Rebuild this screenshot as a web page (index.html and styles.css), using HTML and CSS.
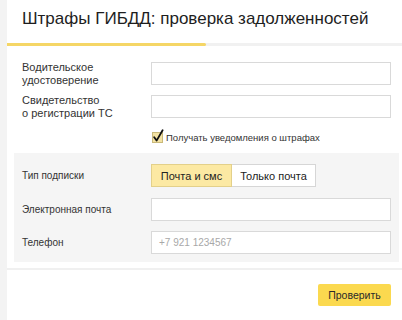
FILE: index.html
```html
<!DOCTYPE html>
<html lang="ru">
<head>
<meta charset="utf-8">
<link rel="stylesheet" href="styles.css">
</head>
<body>
<div class="card">
  <h1 class="title">Штрафы ГИБДД: проверка задолженностей</h1>
  <div class="progress"><div class="progress-fill"></div></div>

  <div class="form-top">
    <div class="row">
      <label class="label">Водительское<br>удостоверение</label>
      <div class="input"></div>
    </div>
    <div class="row">
      <label class="label">Свидетельство<br>о регистрации ТС</label>
      <div class="input"></div>
    </div>
    <div class="row check-row">
      <span></span>
      <div class="check">
        <svg class="check-box" width="14" height="14" viewBox="0 0 14 14">
          <rect x="0.5" y="3.5" width="10" height="10" fill="#f3e2a2" stroke="#c9b97a"/>
          <path d="M2.2 8.2 L4.6 11.6 L10.6 1.2" fill="none" stroke="#111" stroke-width="1.8" stroke-linejoin="round" stroke-linecap="round"/>
        </svg>
        <span class="check-text">Получать уведомления о штрафах</span>
      </div>
    </div>
  </div>

  <div class="form-grey">
    <div class="row">
      <span class="label label-sm">Тип подписки</span>
      <div class="seg">
        <span class="seg-btn seg-active">Почта и смс</span>
        <span class="seg-btn">Только почта</span>
      </div>
    </div>
    <div class="row">
      <span class="label label-sm">Электронная почта</span>
      <div class="input"></div>
    </div>
    <div class="row">
      <span class="label label-sm">Телефон</span>
      <div class="input"><span class="placeholder">+7 921 1234567</span></div>
    </div>
  </div>

  <div class="footer">
    <span class="submit">Проверить</span>
  </div>
</div>
</body>
</html>
```

FILE: styles.css
```css
html, body {
  margin: 0;
  padding: 0;
}
body {
  background: #f3f3f3;
  font-family: "Liberation Sans", Arial, sans-serif;
  color: #333;
  width: 402px;
  height: 320px;
  overflow: hidden;
}
.card {
  margin-left: 7px;
  width: 395px;
  height: 320px;
  background: #fff;
}
.title {
  margin: 0;
  padding: 7px 0 0 15px;
  font-size: 17px;
  line-height: 24px;
  font-weight: normal;
  color: #1e1e1e;
}
.progress {
  margin-top: 12px;
  height: 3px;
  background: #f1f1f1;
}
.progress-fill {
  width: 199px;
  height: 3px;
  border-radius: 0 2px 2px 0;
  background: #f5d666;
}
.form-top {
  padding: 14.5px 0 0 15px;
  display: flex;
  flex-direction: column;
  gap: 7px;
}
.row {
  display: grid;
  grid-template-columns: 129px 240px;
  align-items: center;
}
.label {
  font-size: 11px;
  line-height: 13px;
  color: #333;
}
.label-sm {
  font-size: 10px;
}
.input {
  height: 23px;
  box-sizing: border-box;
  border: 1px solid #d9d9d9;
  background: #fff;
  display: flex;
  align-items: center;
  padding-left: 7px;
}
.placeholder {
  font-size: 10px;
  color: #a8a8a8;
}
.check-row {
  margin-top: 3.5px;
}
.check {
  display: flex;
  align-items: center;
  margin-left: 1px;
  height: 14px;
}
.check-box {
  display: block;
  margin-top: -3px;
}
.check-text {
  font-size: 9.5px;
  color: #333;
}
.form-grey {
  margin: 9px 3px 0 7px;
  background: #f5f5f5;
  padding: 11px 0 8px 8px;
  display: flex;
  flex-direction: column;
  gap: 10.5px;
}
.seg {
  display: flex;
}
.seg-btn {
  box-sizing: border-box;
  height: 23px;
  border: 1px solid #d6d6d6;
  background: #fff;
  font-size: 11px;
  color: #222;
  display: flex;
  align-items: center;
  justify-content: center;
  width: 84px;
}
.seg-btn + .seg-btn {
  border-left: none;
}
.seg-active {
  width: 81px;
  background: #fce9a3;
  border-color: #e3d08a;
}
.footer {
  margin-top: 6px;
  border-top: 2px solid #f0f0f0;
  display: flex;
  justify-content: flex-end;
  padding: 14px 11px 0 0;
}
.submit {
  width: 73px;
  height: 22px;
  border-radius: 2px;
  background: #fbd94f;
  font-size: 10.5px;
  color: #2a2a2a;
  display: flex;
  align-items: center;
  justify-content: center;
}
```
